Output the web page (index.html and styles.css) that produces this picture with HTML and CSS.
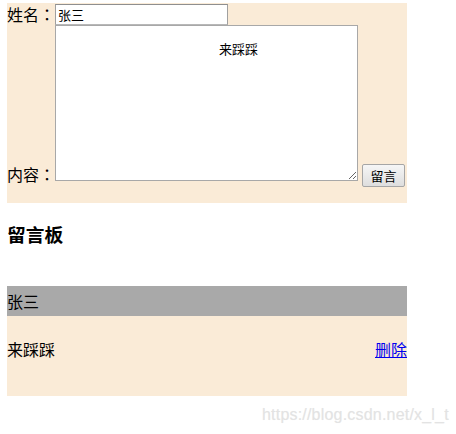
FILE: index.html
```html
<!DOCTYPE html>
<html>
<head>
<meta charset="utf-8">
<link rel="stylesheet" href="styles.css">
</head>
<body>
<div class="page">
  <form class="form-box">
    <div class="row row-name">
      <label class="lbl">姓名<span class="colon">：</span></label>
      <input class="name-input" type="text" value="张三">
    </div>
    <div class="row row-content">
      <label class="lbl">内容<span class="colon">：</span></label>
      <textarea class="content-input">来踩踩</textarea>
      <button class="submit" type="button">留言</button>
    </div>
  </form>
  <h3 class="title">留言板</h3>
  <div class="board">
    <div class="msg-name">张三</div>
    <div class="msg-body">
      <span class="msg-text">来踩踩</span>
      <a class="del" href="#">删除</a>
    </div>
  </div>
</div>
<div class="watermark">https://blog.csdn.net/x_l_t</div>
</body>
</html>
```

FILE: styles.css
```css
html, body {
  margin: 0;
  padding: 0;
  background: #ffffff;
}
body {
  font-family: "Noto Sans CJK SC", "Microsoft YaHei", sans-serif;
  font-size: 16px;
  color: #000;
  position: relative;
  width: 456px;
  height: 434px;
  overflow: hidden;
}
.page {
  padding: 3px 0 0 7px;
}
.form-box {
  width: 400px;
  height: 200px;
  background: #faebd7;
  margin: 0;
  display: flex;
  flex-direction: column;
}
.row {
  display: flex;
}
.row-name {
  align-items: center;
  height: 22px;
}
.lbl {
  font-size: 16px;
  line-height: 22px;
  width: 48px;
  flex: none;
  white-space: nowrap;
}
.colon {
  display: inline-block;
  width: 16px;
  text-align: center;
  font-family: "Noto Sans CJK TC", "Noto Sans CJK SC", sans-serif;
  vertical-align: top;
}
.name-input {
  box-sizing: border-box;
  width: 173px;
  height: 21px;
  margin: 1px 0 0 0;
  padding: 1px 2px;
  border: 1px solid #a0a0a0;
  border-top-color: #8f8f8f;
  border-bottom-color: #b8b8b8;
  font-family: "Noto Sans CJK SC", sans-serif;
  font-size: 13px;
  line-height: 17px;
  background: #fff;
  outline: none;
}
.row-content {
  align-items: flex-end;
  height: 156px;
}
.row-content .lbl {
  line-height: 20px;
  margin-bottom: -3px;
}
.content-input {
  box-sizing: border-box;
  width: 303px;
  height: 156px;
  margin: 0;
  padding: 14px 2px 2px 2px;
  text-indent: 161px;
  border: 1px solid #a8a8a8;
  font-family: "Noto Sans CJK SC", sans-serif;
  font-size: 13px;
  line-height: 17px;
  background: #fff;
  resize: both;
  outline: none;
}
.submit {
  box-sizing: border-box;
  width: 43px;
  height: 23px;
  margin: 0 0 -6px 4px;
  padding: 0;
  border: 1px solid #a6a6a6;
  border-radius: 2px;
  background: linear-gradient(#f6f6f6, #dedede);
  font-family: "Noto Sans CJK SC", sans-serif;
  font-size: 13px;
  line-height: 19px;
  color: #000;
}
.title {
  margin: 0;
  padding-top: 17px;
  height: 66px;
  font-size: 18.72px;
  line-height: 27px;
  font-weight: bold;
}
.board {
  width: 400px;
}
.msg-name {
  height: 30px;
  line-height: 30px;
  background: #a9a9a9;
  font-size: 16px;
}
.msg-body {
  height: 80px;
  background: #faebd7;
  box-sizing: border-box;
  padding-top: 22px;
  display: flex;
  justify-content: space-between;
  align-items: flex-start;
  line-height: 22px;
}
.del {
  color: #0000ee;
  text-decoration: underline;
}
.watermark {
  position: absolute;
  left: 262px;
  top: 406px;
  font-family: "Liberation Sans", Arial, sans-serif;
  font-size: 16px;
  letter-spacing: 0.2px;
  color: #e3e3e3;
  text-shadow: 0 0 1px #f2f2f2;
}
```
